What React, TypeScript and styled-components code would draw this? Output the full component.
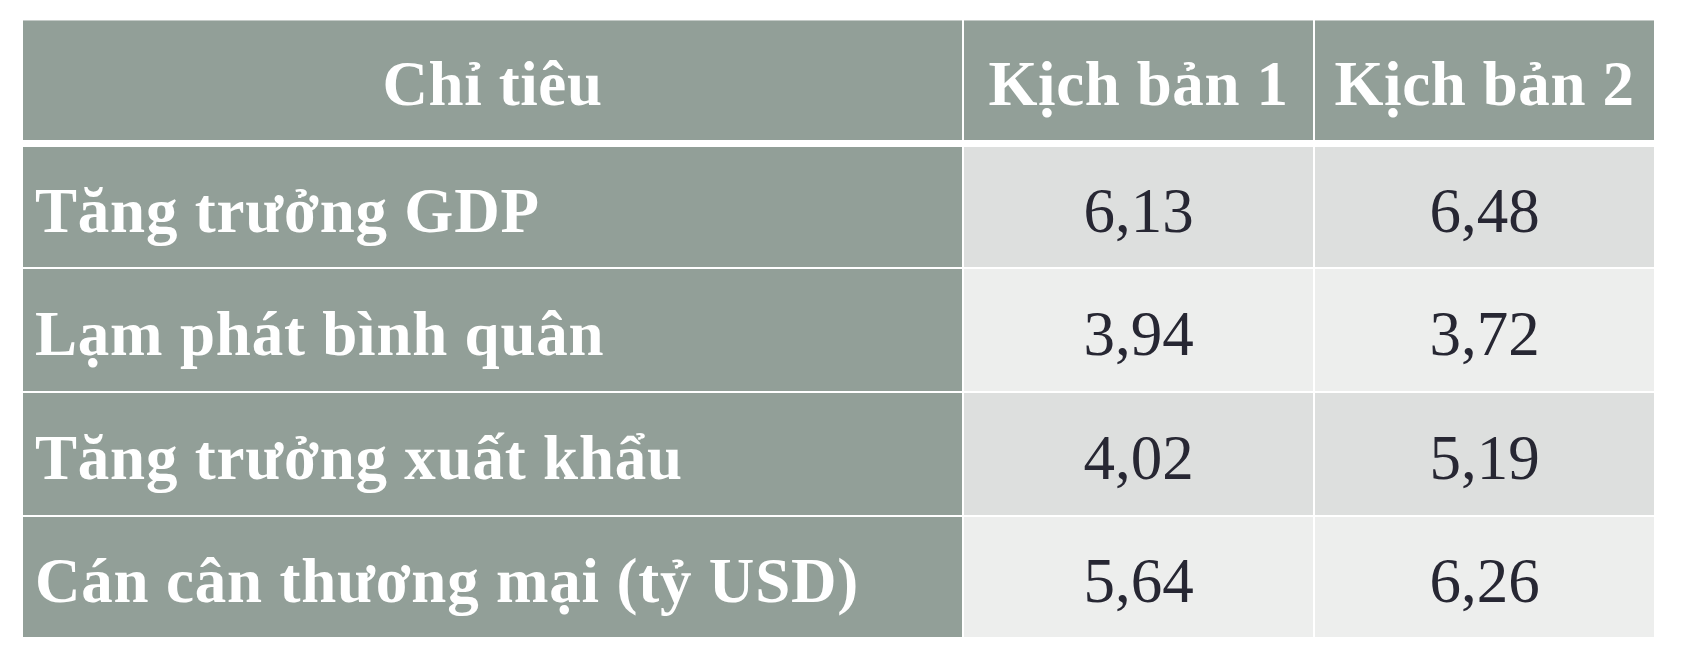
import React from 'react';
import styled, {createGlobalStyle} from "styled-components";

const rows = [
    {label: "Tăng trưởng GDP", a: "6,13", b: "6,48"},
    {label: "Lạm phát bình quân", a: "3,94", b: "3,72"},
    {label: "Tăng trưởng xuất khẩu", a: "4,02", b: "5,19"},
    {label: "Cán cân thương mại (tỷ USD)", a: "5,64", b: "6,26"},
];

export default function App() {
    return (
        <>
            <GlobalStyle/>
            <Page>
                <Table>
                    <HeadCell>Chỉ tiêu</HeadCell>
                    <HeadCell>Kịch bản 1</HeadCell>
                    <HeadCell>Kịch bản 2</HeadCell>
                    {rows.map((r, i) => (
                        <React.Fragment key={r.label}>
                            <LabelCell first={i === 0}>{r.label}</LabelCell>
                            <ValueCell first={i === 0} odd={i % 2 === 1}>{r.a}</ValueCell>
                            <ValueCell first={i === 0} odd={i % 2 === 1}>{r.b}</ValueCell>
                        </React.Fragment>
                    ))}
                </Table>
            </Page>
        </>
    );
}

const GlobalStyle = createGlobalStyle`
  html, body {
    margin: 0;
    padding: 0;
    background: #ffffff;
  }
`

const Page = styled.div`
  padding: 20px 0 0 23px;
  font-family: "Liberation Serif", "Times New Roman", serif;
`

const Table = styled.div`
  display: grid;
  grid-template-columns: 939px 349px 339px;
  grid-template-rows: 120px 127px 124px 124px 122px;
  column-gap: 2px;
  width: 1631px;
  background: #ffffff;
`

const HeadCell = styled.div`
  display: flex;
  align-items: center;
  justify-content: center;
  padding-top: 8px;
  background: #929f98;
  color: #ffffff;
  font-size: 63px;
  font-weight: 700;
  line-height: 1;
  letter-spacing: 0.6px;
  border-top: 1px solid #c4cac7;
`

const LabelCell = styled.div<{first?: boolean}>`
  display: flex;
  align-items: center;
  margin-top: ${p => p.first ? "7px" : "2px"};
  padding-left: 12px;
  padding-top: 8px;
  background: #929f98;
  color: #ffffff;
  font-size: 63px;
  font-weight: 700;
  line-height: 1;
  letter-spacing: 0.8px;
  white-space: nowrap;
`

const ValueCell = styled.div<{first?: boolean; odd?: boolean}>`
  display: flex;
  align-items: center;
  justify-content: center;
  margin-top: ${p => p.first ? "7px" : "2px"};
  padding-top: 8px;
  background: ${p => p.odd ? "#edeeed" : "#dddfde"};
  color: #272733;
  font-size: 63px;
  font-weight: 400;
  line-height: 1;
`
